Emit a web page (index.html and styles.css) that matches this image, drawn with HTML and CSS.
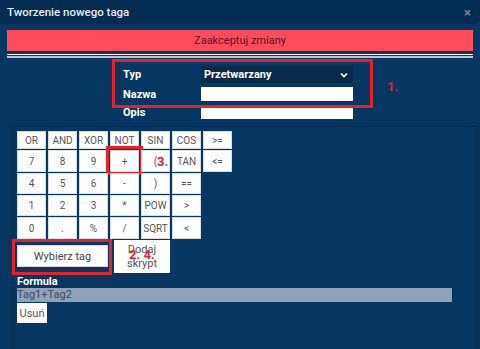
FILE: index.html
```html
<!DOCTYPE html>
<html lang="pl">
<head>
  <meta charset="UTF-8">
  <title>Tworzenie nowego taga</title>
  <link rel="stylesheet" href="styles.css">
</head>
<body>
  <div class="modal">
    <div class="modal-head">
      <span class="modal-title">Tworzenie nowego taga</span>
      <span class="modal-close">&times;</span>
    </div>
    <div class="modal-body">
      <button class="accept-btn">Zaakceptuj zmiany</button>
      <div class="rule"></div>

      <div class="form-wrap">
        <div class="tag-form">
          <label>Typ</label>
          <div class="select">Przetwarzany <span class="chev"><svg width="8" height="6" viewBox="0 0 8 6"><path d="M1 1.5 L4 4.5 L7 1.5" fill="none" stroke="#fff" stroke-width="1.6"/></svg></span></div>
          <label>Nazwa</label>
          <input type="text">
          <label>Opis</label>
          <input type="text">
        </div>
        <div class="mark mark-form"></div>
        <span class="note note-1">1.</span>
      </div>

      <div class="editor">
        <div class="calc">
          <button>OR</button><button>AND</button><button>XOR</button><button>NOT</button><button>SIN</button><button>COS</button><button>&gt;=</button>
          <button>7</button><button>8</button><button>9</button><button class="marked">+</button><button class="noted">(<span class="note note-3">3.</span></button><button>TAN</button><button>&lt;=</button>
          <button>4</button><button>5</button><button>6</button><button>-</button><button>)</button><button>==</button><span></span>
          <button>1</button><button>2</button><button>3</button><button>*</button><button>POW</button><button>&gt;</button><span></span>
          <button>0</button><button>.</button><button>%</button><button>/</button><button>SQRT</button><button>&lt;</button><span></span>
        </div>

        <div class="actions">
          <button class="pick-btn">Wybierz tag</button>
          <button class="script-btn">Dodaj<br>skrypt</button>
          <div class="mark mark-pick"></div>
          <span class="note note-24">2. 4.</span>
        </div>

        <div class="formula">
          <div class="formula-label">Formula</div>
          <div class="formula-value">Tag1+Tag2</div>
          <button class="remove-btn">Usuń</button>
        </div>
      </div>
    </div>
  </div>
</body>
</html>
```

FILE: styles.css
```css
html, body {
  margin: 0;
  height: 349px;
  overflow: hidden;
}

body {
  font-family: Roboto, "Liberation Sans", sans-serif;
  background: #063763;
}

.modal {
  height: 349px;
  display: flex;
  flex-direction: column;
  background: #063763;
  overflow: hidden;
}

.modal-head {
  flex: none;
  height: 24px;
  background: #042b50;
  display: flex;
  align-items: center;
  justify-content: space-between;
  padding: 0 9px 0 7px;
}

.modal-title {
  color: #e6ecf3;
  font-size: 11.5px;
  font-weight: 500;
}

.modal-close {
  color: #7b8898;
  font-size: 13px;
  font-weight: bold;
}

.modal-body {
  flex: 1;
  min-height: 0;
  display: flex;
  flex-direction: column;
  padding: 6px 7px 0 7px;
}

.accept-btn {
  display: block;
  flex: none;
  width: 100%;
  height: 21px;
  border: none;
  background: #ff4b5c;
  color: #4a1822;
  font-family: Roboto, "Liberation Sans", sans-serif;
  font-size: 11px;
  padding: 0;
}

.rule {
  flex: none;
  margin-top: 3px;
  height: 1px;
  background: #ffffff;
  border-bottom: 1px solid #063763;
  box-shadow: 0 2px 0 #b8c4d2;
}

/* formularz */
.form-wrap {
  flex: none;
  position: relative;
  height: 67px;
}

.tag-form {
  display: grid;
  grid-template-columns: 78px 152px;
  row-gap: 4px;
  align-items: center;
  padding: 10px 0 0 116px;
}

.tag-form label {
  color: #fff;
  font-size: 11px;
  font-weight: bold;
}

.select {
  height: 17px;
  background: #0a2a4a;
  color: #fff;
  font-size: 11px;
  font-weight: bold;
  display: flex;
  align-items: center;
  justify-content: space-between;
  padding: 0 5px 0 3px;
}

.chev {
  display: flex;
}

.tag-form input {
  height: 14px;
  border: none;
  padding: 0;
  margin: 0;
  background: #fff;
  box-sizing: border-box;
}

.mark {
  position: absolute;
  border: 3px solid #e8202a;
  box-sizing: border-box;
  pointer-events: none;
}

.mark-form {
  left: 105px;
  top: 3px;
  width: 261px;
  height: 49px;
}

.note {
  position: absolute;
  color: #e8202a;
  font-weight: bold;
  font-size: 13px;
  font-family: Roboto, "Liberation Sans", sans-serif;
}

.note-1 {
  left: 380px;
  top: 23px;
}

/* edytor */
.editor {
  flex: 1;
  min-height: 0;
  margin: 3px -4px 0 5px;
  border-top: 1px solid #042c52;
  border-left: 1px solid #042c52;
  border-right: 1px solid #042c52;
  padding: 4px 0 0 4px;
}

.calc {
  display: grid;
  grid-template-columns: repeat(7, 29px);
  grid-template-rows: 18px 22px 21px 21px 22px;
  column-gap: 2px;
  row-gap: 1px;
}

.calc button {
  border: 1px solid #d8dde3;
  background: #fff;
  color: #555;
  font-family: Roboto, "Liberation Sans", sans-serif;
  font-size: 10px;
  padding: 0;
  position: relative;
}

.calc .marked::after {
  content: '';
  position: absolute;
  left: -5px;
  top: -5px;
  right: -5px;
  bottom: -4px;
  border: 3px solid #e8202a;
}

.note-3 {
  left: 15px;
  top: 3px;
}

.actions {
  position: relative;
  display: flex;
  align-items: center;
  gap: 6px;
  width: 153px;
}

.pick-btn {
  width: 91px;
  height: 22px;
  border: 1px solid #d8dde3;
  background: #fff;
  color: #444;
  font-family: Roboto, "Liberation Sans", sans-serif;
  font-size: 11px;
  padding: 0;
}

.script-btn {
  width: 56px;
  height: 33px;
  border: none;
  background: #fff;
  color: #555;
  font-family: Roboto, "Liberation Sans", sans-serif;
  font-size: 11px;
  line-height: 14px;
  padding: 0;
  margin-top: 1px;
}

.mark-pick {
  left: -5px;
  top: 0;
  width: 100px;
  height: 36px;
}

.note-24 {
  left: 112px;
  top: 8px;
}

.formula {
  width: 436px;
  margin-top: 2px;
}

.formula-label {
  color: #fff;
  font-size: 11px;
  font-weight: bold;
  height: 13px;
  line-height: 13px;
}

.formula-value {
  height: 14px;
  line-height: 14px;
  background: #8ea2b8;
  color: #3c4a5a;
  font-size: 11px;
  border-right: 1px solid #042c52;
}

.remove-btn {
  display: block;
  height: 20px;
  width: 30px;
  margin-top: 1px;
  border: none;
  background: #fff;
  color: #555;
  font-family: Roboto, "Liberation Sans", sans-serif;
  font-size: 11px;
  padding: 0;
}
```
